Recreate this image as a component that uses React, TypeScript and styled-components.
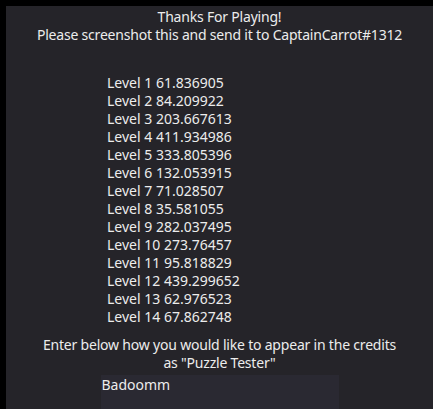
import React from "react";
import styled, { createGlobalStyle } from "styled-components";

const Global = createGlobalStyle`
  html, body { margin: 0; padding: 0; background: #000; overflow: hidden; }
  body { font-family: "Noto Sans", "Open Sans", sans-serif; }
`;

const Panel = styled.div`
  margin: 6px 0 0 6px;
  height: 403px;
  background: #252429;
  color: #ececec;
  font-size: 14px;
  line-height: 18px;
  display: flex;
  flex-direction: column;
  padding-top: 2px;
  box-sizing: border-box;
`;

const Centered = styled.div`
  text-align: center;
  white-space: nowrap;
  letter-spacing: -0.2px;
`;

const List = styled.div`
  margin: 30px 0 0 101px;
  display: flex;
  flex-direction: column;
`;

const Footer = styled.div`
  margin-top: 10px;
  display: flex;
  flex-direction: column;
  align-items: center;
`;

const Input = styled.div`
  margin-top: 3px;
  width: 238px;
  height: 40px;
  background: #2a2932;
  box-sizing: border-box;
  padding: 1px 1px;
  text-align: left;
`;

const levels = [
  "61.836905",
  "84.209922",
  "203.667613",
  "411.934986",
  "333.805396",
  "132.053915",
  "71.028507",
  "35.581055",
  "282.037495",
  "273.76457",
  "95.818829",
  "439.299652",
  "62.976523",
  "67.862748",
];

export default function App() {
  return (
    <>
      <Global />
      <Panel>
        <Centered>Thanks For Playing!</Centered>
        <Centered>Please screenshot this and send it to CaptainCarrot#1312</Centered>
        <List>
          {levels.map((t, i) => (
            <div key={i}>
              Level {i + 1} {t}
            </div>
          ))}
        </List>
        <Footer>
          <Centered>Enter below how you would like to appear in the credits</Centered>
          <Centered>as "Puzzle Tester"</Centered>
          <Input>Badoomm</Input>
        </Footer>
      </Panel>
    </>
  );
}
